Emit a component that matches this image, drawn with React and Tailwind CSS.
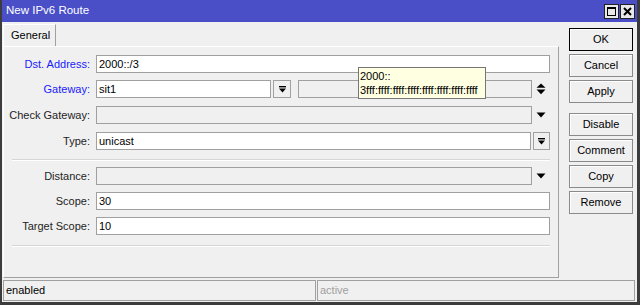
import React from 'react'

const FieldBox = ({ value, disabled, className = '' }) => (
  <div
    className={`h-[18px] border border-[#a0a0a0] px-[2px] text-[11px] leading-[16px] text-black truncate ${
      disabled ? 'bg-[#f0f0f0]' : 'bg-white'
    } ${className}`}
  >
    {value}
  </div>
)

// down arrow with a bar on top, used on combo buttons
const ComboButton = ({ className = '' }) => (
  <div className={`h-[18px] border border-[#a0a0a0] bg-[#f0f0f0] flex items-center justify-center ${className}`}>
    <svg width="9" height="9" viewBox="0 0 9 9">
      <rect x="1" y="1" width="7" height="1.4" fill="#000" />
      <path d="M1 3.5 L8 3.5 L4.5 7.5 Z" fill="#000" />
    </svg>
  </div>
)

const DownArrow = () => (
  <div className="w-[18px] h-[18px] flex items-center justify-center">
    <svg width="10" height="6" viewBox="0 0 10 6">
      <path d="M0.5 0.5 L9.5 0.5 L5 5.5 Z" fill="#000" />
    </svg>
  </div>
)

const UpDownArrow = () => (
  <div className="w-[18px] h-[18px] flex items-center justify-center">
    <svg width="10" height="12" viewBox="0 0 10 12">
      <path d="M0.5 4.8 L9.5 4.8 L5 0.5 Z" fill="#000" />
      <path d="M0.5 6.6 L9.5 6.6 L5 11.3 Z" fill="#000" />
    </svg>
  </div>
)

const Row = ({ label, blue, className = '', children }) => (
  <div className={`flex items-center h-[18px] ${className}`}>
    <div className={`w-[86px] text-right text-[11px] leading-none whitespace-nowrap ${blue ? 'text-[#1a1aff]' : 'text-[#1e1e1e]'}`}>
      {label}
    </div>
    <div className="ml-[6px] flex-1 flex items-center">{children}</div>
  </div>
)

const SideButton = ({ label, focused, className = '' }) => (
  <button
    className={`w-[64px] h-[23px] flex items-center justify-center text-[11px] text-black bg-[#f0f0f0] border shadow-[inset_1px_1px_0_#ffffff] ${
      focused ? 'border-black' : 'border-[#8a8a8a]'
    } ${className}`}
  >
    {label}
  </button>
)

export default function App() {
  return (
    <div className="relative w-[640px] h-[305px] flex flex-col bg-[#f0f0f0] border-l-2 border-r-[3px] border-b-[3px] border-[#3c3c3c] font-['Liberation_Sans',Arial,sans-serif] overflow-hidden">
      {/* Title bar */}
      <div className="h-[22px] shrink-0 bg-[#4a4fc8] flex items-center justify-between pl-[4px] pr-[2px]">
        <span className="text-white text-[11.5px] leading-none">New IPv6 Route</span>
        <div className="flex items-center gap-[1px]">
          <div className="w-[15px] h-[15px] bg-[#e8e8e8] border border-[#222] flex items-center justify-center">
            <svg width="9" height="9" viewBox="0 0 9 9">
              <rect x="0.5" y="0.5" width="8" height="8" fill="none" stroke="#000" />
              <rect x="0" y="0" width="9" height="2" fill="#000" />
            </svg>
          </div>
          <div className="w-[15px] h-[15px] bg-[#e8e8e8] border border-[#222] flex items-center justify-center">
            <svg width="9" height="9" viewBox="0 0 9 9">
              <path d="M1 1 L8 8 M8 1 L1 8" stroke="#000" strokeWidth="2" />
            </svg>
          </div>
        </div>
      </div>

      {/* Body */}
      <div className="flex h-[256px] shrink-0">
        <div className="w-[557px] flex flex-col">
          <div className="h-[24px] flex items-end pl-[1px]">
            <div className="h-[22px] w-[53px] border-t border-l border-white border-r border-r-[#a0a0a0] flex items-center pl-[7px] text-[11px] text-black">
              General
            </div>
          </div>
          <div className="ml-[1px] h-[232px] border-t border-l border-white border-r border-b border-r-[#a0a0a0] border-b-[#a0a0a0] pt-[8px] pr-[8px] flex flex-col">
            <Row label="Dst. Address:" blue>
              <FieldBox value="2000::/3" className="flex-1" />
            </Row>
            <Row label="Gateway:" blue className="mt-[7px]">
              <FieldBox value="sit1" className="w-[175px]" />
              <ComboButton className="ml-[2px] w-[18px]" />
              <FieldBox disabled className="ml-[7px] flex-1" />
              <UpDownArrow />
            </Row>
            <Row label="Check Gateway:" className="mt-[8px]">
              <FieldBox disabled className="flex-1" />
              <DownArrow />
            </Row>
            <Row label="Type:" className="mt-[8px]">
              <FieldBox value="unicast" className="flex-1" />
              <ComboButton className="ml-[2px] w-[17px]" />
            </Row>
            <div className="mt-[9px] ml-[8px] h-[1px] bg-[#d6d6d6] shadow-[0_1px_0_#ffffff]" />
            <Row label="Distance:" className="mt-[7px]">
              <FieldBox disabled className="flex-1" />
              <DownArrow />
            </Row>
            <Row label="Scope:" className="mt-[7px]">
              <FieldBox value="30" className="flex-1" />
            </Row>
            <Row label="Target Scope:" className="mt-[7px]">
              <FieldBox value="10" className="flex-1" />
            </Row>
            <div className="mt-[10px] ml-[8px] h-[1px] bg-[#d6d6d6] shadow-[0_1px_0_#ffffff]" />
          </div>
        </div>

        <div className="ml-[10px] pt-[6px] flex flex-col">
          <SideButton label="OK" focused />
          <SideButton label="Cancel" className="mt-[3px]" />
          <SideButton label="Apply" className="mt-[3px]" />
          <SideButton label="Disable" className="mt-[10px]" />
          <SideButton label="Comment" className="mt-[3px]" />
          <SideButton label="Copy" className="mt-[3px]" />
          <SideButton label="Remove" className="mt-[3px]" />
        </div>
      </div>

      {/* Status bar */}
      <div className="flex h-[21px] ml-[1px] mt-[2px] gap-[1px]">
        <div className="w-[313px] border border-[#a0a0a0] flex items-center pl-[2px] text-[11px] text-black">enabled</div>
        <div className="w-[318px] border border-[#a0a0a0] flex items-center pl-[2px] text-[11px] text-[#a0a0a0]">active</div>
      </div>

      {/* Tooltip */}
      <div className="absolute left-[356px] top-[67px] w-[128px] h-[32px] bg-[#ffffe1] border border-[#767676] px-[1px] pt-[1px] text-[11px] leading-[14px] text-black">
        <div>2000::</div>
        <div className="whitespace-nowrap">3fff:ffff:ffff:ffff:ffff:ffff:ffff:ffff</div>
      </div>
    </div>
  )
}
